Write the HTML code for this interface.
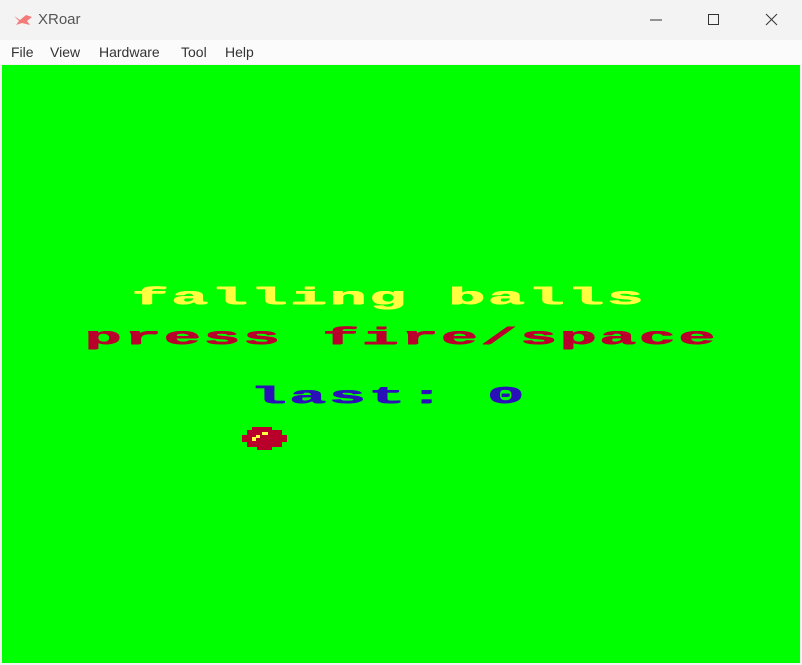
<!DOCTYPE html>
<html><head><style>
body{margin:0;width:802px;height:665px;overflow:hidden;background:#f3f3f3;font-family:"Liberation Sans",sans-serif;position:relative}
.tb{position:absolute;left:0;top:0;width:802px;height:40px;background:#f3f3f3}
.menu{position:absolute;left:0;top:40px;width:802px;height:24px;background:#fbfbfb;font-size:14px;color:#333}
.menu span{position:absolute;top:4px}
.scr{position:absolute;left:2px;top:65px;width:798px;height:598px;background:#00ff00}
.t{position:absolute;font-family:"Liberation Mono",monospace;font-weight:bold;font-size:24px;line-height:24px;transform:scaleX(2.57);transform-origin:left top;white-space:pre;letter-spacing:1px;text-shadow:0.6px 0 currentColor,0 0.6px currentColor}
</style></head><body>
<div class="tb">
<svg style="position:absolute;left:12px;top:12px" width="22" height="16" viewBox="0 0 22 16"><path d="M2 4 L8 8 L14 3 L20 5 L15 9 L18 13 L10 11 L4 13 L7 9 Z" fill="#f47a7a"/></svg>
<span style="position:absolute;left:38px;top:11px;font-size:15px;color:#555">XRoar</span>
<svg style="position:absolute;left:640px;top:8px" width="150" height="24"><line x1="10" y1="12" x2="22" y2="12" stroke="#333"/><rect x="68.5" y="6.5" width="10" height="10" fill="none" stroke="#333"/><path d="M126 6 L137 17 M137 6 L126 17" stroke="#333"/></svg>
</div>
<div class="menu"><span style="left:11px">File</span><span style="left:50px">View</span><span style="left:99px">Hardware</span><span style="left:181px">Tool</span><span style="left:225px">Help</span></div>
<div class="scr"></div>
<div class="t" style="left:131px;top:287px;color:#ffff40">falling balls</div>
<div class="t" style="left:84px;top:327px;color:#b8002a">press fire/space</div>
<div class="t" style="left:249px;top:386px;color:#2a10b8">last: 0</div>
<svg style="position:absolute;left:242px;top:427px" width="46" height="24"><path d="M10 0 H30 V3 H40 V8 H45 V15 H40 V20 H30 V23 H15 V20 H5 V15 H0 V8 H5 V3 H10Z" fill="#b8002a"/><path d="M10 10 H14 V8 H20 V5 H26 V8 H18 V11 H14 V14 H10Z" fill="#ffff40"/></svg>
</body></html>
